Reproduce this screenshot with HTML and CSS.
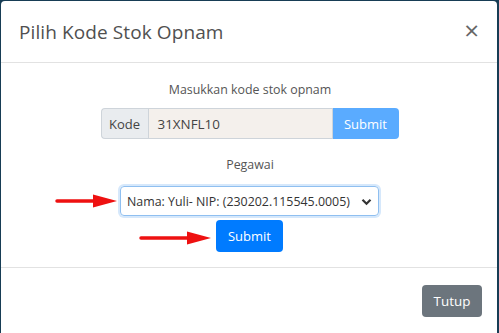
FILE: index.html
```html
<!DOCTYPE html>
<html>
<head>
<meta charset="utf-8">
<link rel="stylesheet" href="styles.css">
</head>
<body>
<div class="backdrop">
  <div class="modal">
    <div class="modal-header">
      <h5 class="modal-title">Pilih Kode Stok Opnam</h5>
      <span class="close">&times;</span>
    </div>
    <div class="modal-body">
      <div class="label">Masukkan kode stok opnam</div>
      <div class="input-group">
        <span class="addon">Kode</span>
        <span class="input">31XNFL10</span>
        <span class="btn btn-light-primary">Submit</span>
      </div>
      <div class="label label2">Pegawai</div>
      <div class="select-row">
        <svg class="arrow arrow1" width="64" height="14" viewBox="0 0 64 14"><line x1="2" y1="7" x2="44" y2="7" stroke="#ee1111" stroke-width="3.5" stroke-linecap="round"/><polygon points="38,0.5 62,7 38,13.5" fill="#ee1111"/></svg>
        <div class="select">Nama: Yuli- NIP: (230202.115545.0005)
          <svg class="chev" width="11" height="8" viewBox="0 0 11 8"><polyline points="1.5,1.8 5.5,5.8 9.5,1.8" fill="none" stroke="#333" stroke-width="2.2"/></svg>
        </div>
      </div>
      <div class="submit-row">
        <svg class="arrow arrow2" width="74" height="14" viewBox="0 0 74 14"><line x1="2" y1="7" x2="54" y2="7" stroke="#ee1111" stroke-width="3.5" stroke-linecap="round"/><polygon points="48,0.5 72,7 48,13.5" fill="#ee1111"/></svg>
        <span class="btn btn-primary">Submit</span>
      </div>
    </div>
    <div class="modal-footer">
      <span class="btn btn-secondary">Tutup</span>
    </div>
  </div>
</div>
</body>
</html>
```
FILE: styles.css
```css
html, body { margin: 0; padding: 0; }
body {
  width: 499px; height: 333px; overflow: hidden;
  background: #173d55;
  font-family: "Open Sans", "Noto Sans", sans-serif;
}
.backdrop { padding: 1px 2px 0 1px; }
.modal {
  background: #fff;
  border-radius: 4px 4px 0 0;
  height: 340px;
  box-sizing: border-box;
}
.modal-header {
  height: 62px;
  box-sizing: border-box;
  border-bottom: 1px solid #e2e2e2;
  display: flex; align-items: center; justify-content: space-between;
  padding: 0 18px 0 18px;
}
.modal-title {
  margin: 0; font-weight: 400; font-size: 19px; color: #505050;
  letter-spacing: 0.1px;
}
.close { font-size: 26px; color: #666; font-weight: 400; line-height: 1; margin-top: -4px; }
.modal-body {
  height: 205px; box-sizing: border-box;
  display: flex; flex-direction: column; align-items: center;
  padding-top: 18px;
  border-bottom: 1px solid #e2e2e2;
  font-size: 12.4px;
}
.label { color: #555; line-height: 18px; margin-left: 2px; }
.label2 { margin-top: 17px; }
.input-group {
  display: flex; height: 31px; margin-top: 9px; margin-left: 1px;
}
.addon {
  width: 47px; box-sizing: border-box;
  background: #e9ecef; border: 1px solid #ced4da; border-right: none;
  border-radius: 4px 0 0 4px;
  display: flex; align-items: center; justify-content: center;
  color: #444; font-size: 13px;
}
.input {
  width: 185px; box-sizing: border-box;
  background: #f4f0ec; border: 1px solid #ced4da;
  display: flex; align-items: center; padding-left: 9px;
  font-size: 13.4px; color: #444;
}
.btn {
  display: flex; align-items: center; justify-content: center;
  color: #fff; border-radius: 4px; box-sizing: border-box;
  font-size: 13px;
}
.btn-light-primary {
  width: 66px; background: #5aabff; border-radius: 0 4px 4px 0;
}
.select-row {
  position: relative; margin-top: 12px; margin-left: 1px;
}
.select {
  width: 259px; height: 30px; box-sizing: border-box;
  border: 1px solid #8fbff0; border-radius: 4px;
  box-shadow: 0 0 0 2px #d6e8fb;
  display: flex; align-items: center; padding-left: 6px;
  color: #333; font-size: 12.4px; position: relative;
}
.chev { position: absolute; right: 6px; top: 11px; }
.arrow { position: absolute; }
.arrow1 { left: -65px; top: 8px; }
.submit-row { position: relative; margin-top: 4px; margin-left: 1px; }
.arrow2 { left: -77px; top: 11px; }
.btn-primary {
  width: 67px; height: 32px; background: #007bff; font-size: 13px;
}
.modal-footer {
  display: flex; justify-content: flex-end;
  padding: 17px 15px 0 0;
}
.btn-secondary {
  width: 60px; height: 32px; background: #6c757d; font-size: 13.4px;
}
```
